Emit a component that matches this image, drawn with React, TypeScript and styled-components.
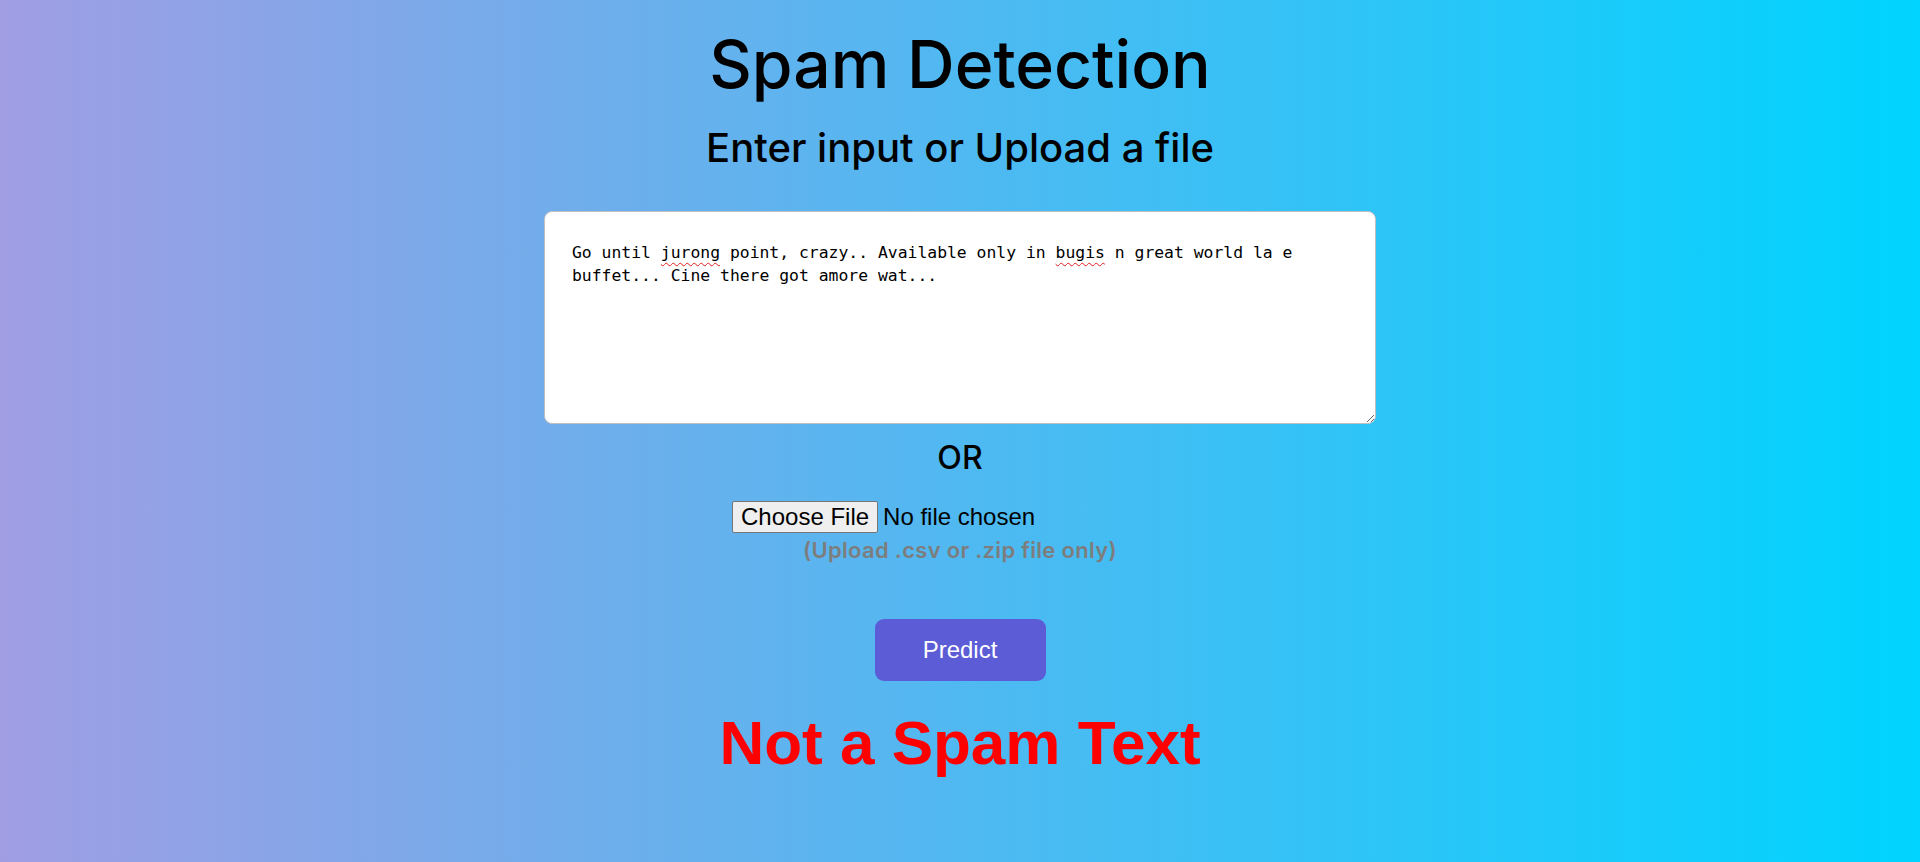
import React from "react";
import styled, { createGlobalStyle } from "styled-components";

const Global = createGlobalStyle`
  html, body { margin: 0; padding: 0; }
  body {
    min-height: 862px;
    background: linear-gradient(90deg, #a09de3 0%, #00d4ff 100%);
    font-family: "Inter", "Liberation Sans", sans-serif;
  }
`;

const Page = styled.main`
  display: flex;
  flex-direction: column;
  align-items: center;
  min-height: 862px;
  padding-top: 22px;
  box-sizing: border-box;
`;

const Title = styled.h1`
  margin: 0;
  font-family: "Inter", sans-serif;
  font-weight: 500;
  font-size: 66px;
  line-height: 84px;
  color: #000;
`;

const Subtitle = styled.h2`
  margin: 18px 0 0;
  font-family: "Inter", sans-serif;
  font-weight: 500;
  font-size: 40px;
  line-height: 48px;
  color: #000;
`;

const TextBox = styled.div`
  margin-top: 39px;
  width: 832px;
  height: 213px;
  box-sizing: border-box;
  background: #fff;
  border: 1px solid #c0c0c0;
  border-radius: 8px;
  padding: 29px 27px;
  font-family: "DejaVu Sans Mono", "Liberation Mono", monospace;
  font-size: 16.4px;
  line-height: 23px;
  color: #000;
  overflow: auto;
  resize: both;
  white-space: pre-wrap;
`;

const Misspelled = styled.span`
  text-decoration: underline wavy #e02020;
  text-decoration-thickness: 1px;
  text-underline-offset: 4px;
`;

const Or = styled.h3`
  margin: 15px 0 0;
  font-family: "Inter", sans-serif;
  font-weight: 500;
  font-size: 32px;
  line-height: 38px;
  color: #000;
`;

const FileInput = styled.input`
  margin-top: 24px;
  width: 456px;
  font-family: "Liberation Sans", Arial, sans-serif;
  font-size: 24px;
  color: #000;
  &::file-selector-button {
    font-family: "Liberation Sans", Arial, sans-serif;
    font-size: 24px;
    background: #efefef;
    border: 1px solid #767676;
    border-radius: 2px;
    padding: 1px 8px;
    margin-right: 5px;
    color: #000;
  }
`;

const Hint = styled.p`
  margin: 3px 0 0;
  font-family: "Inter", sans-serif;
  font-weight: 600;
  font-size: 22px;
  letter-spacing: 0.3px;
  line-height: 28px;
  color: #7d7d7d;
`;

const PredictButton = styled.button`
  margin-top: 55px;
  width: 171px;
  height: 62px;
  border: none;
  border-radius: 9px;
  background: #5c5cd6;
  color: #fff;
  font-family: "Liberation Sans", Arial, sans-serif;
  font-size: 24px;
  cursor: pointer;
`;

const Result = styled.div`
  margin-top: 26px;
  font-family: "Liberation Sans", Arial, sans-serif;
  font-weight: 700;
  font-size: 62px;
  line-height: 72px;
  color: #ff0000;
`;

export default function App() {
  return (
    <>
      <Global />
      <Page>
        <Title>Spam Detection</Title>
        <Subtitle>Enter input or Upload a file</Subtitle>
        <TextBox>
          Go until <Misspelled>jurong</Misspelled> point, crazy.. Available only in{" "}
          <Misspelled>bugis</Misspelled> n great world la e buffet... Cine there got amore wat...
        </TextBox>
        <Or>OR</Or>
        <FileInput type="file" />
        <Hint>(Upload .csv or .zip file only)</Hint>
        <PredictButton>Predict</PredictButton>
        <Result>Not a Spam Text</Result>
      </Page>
    </>
  );
}
